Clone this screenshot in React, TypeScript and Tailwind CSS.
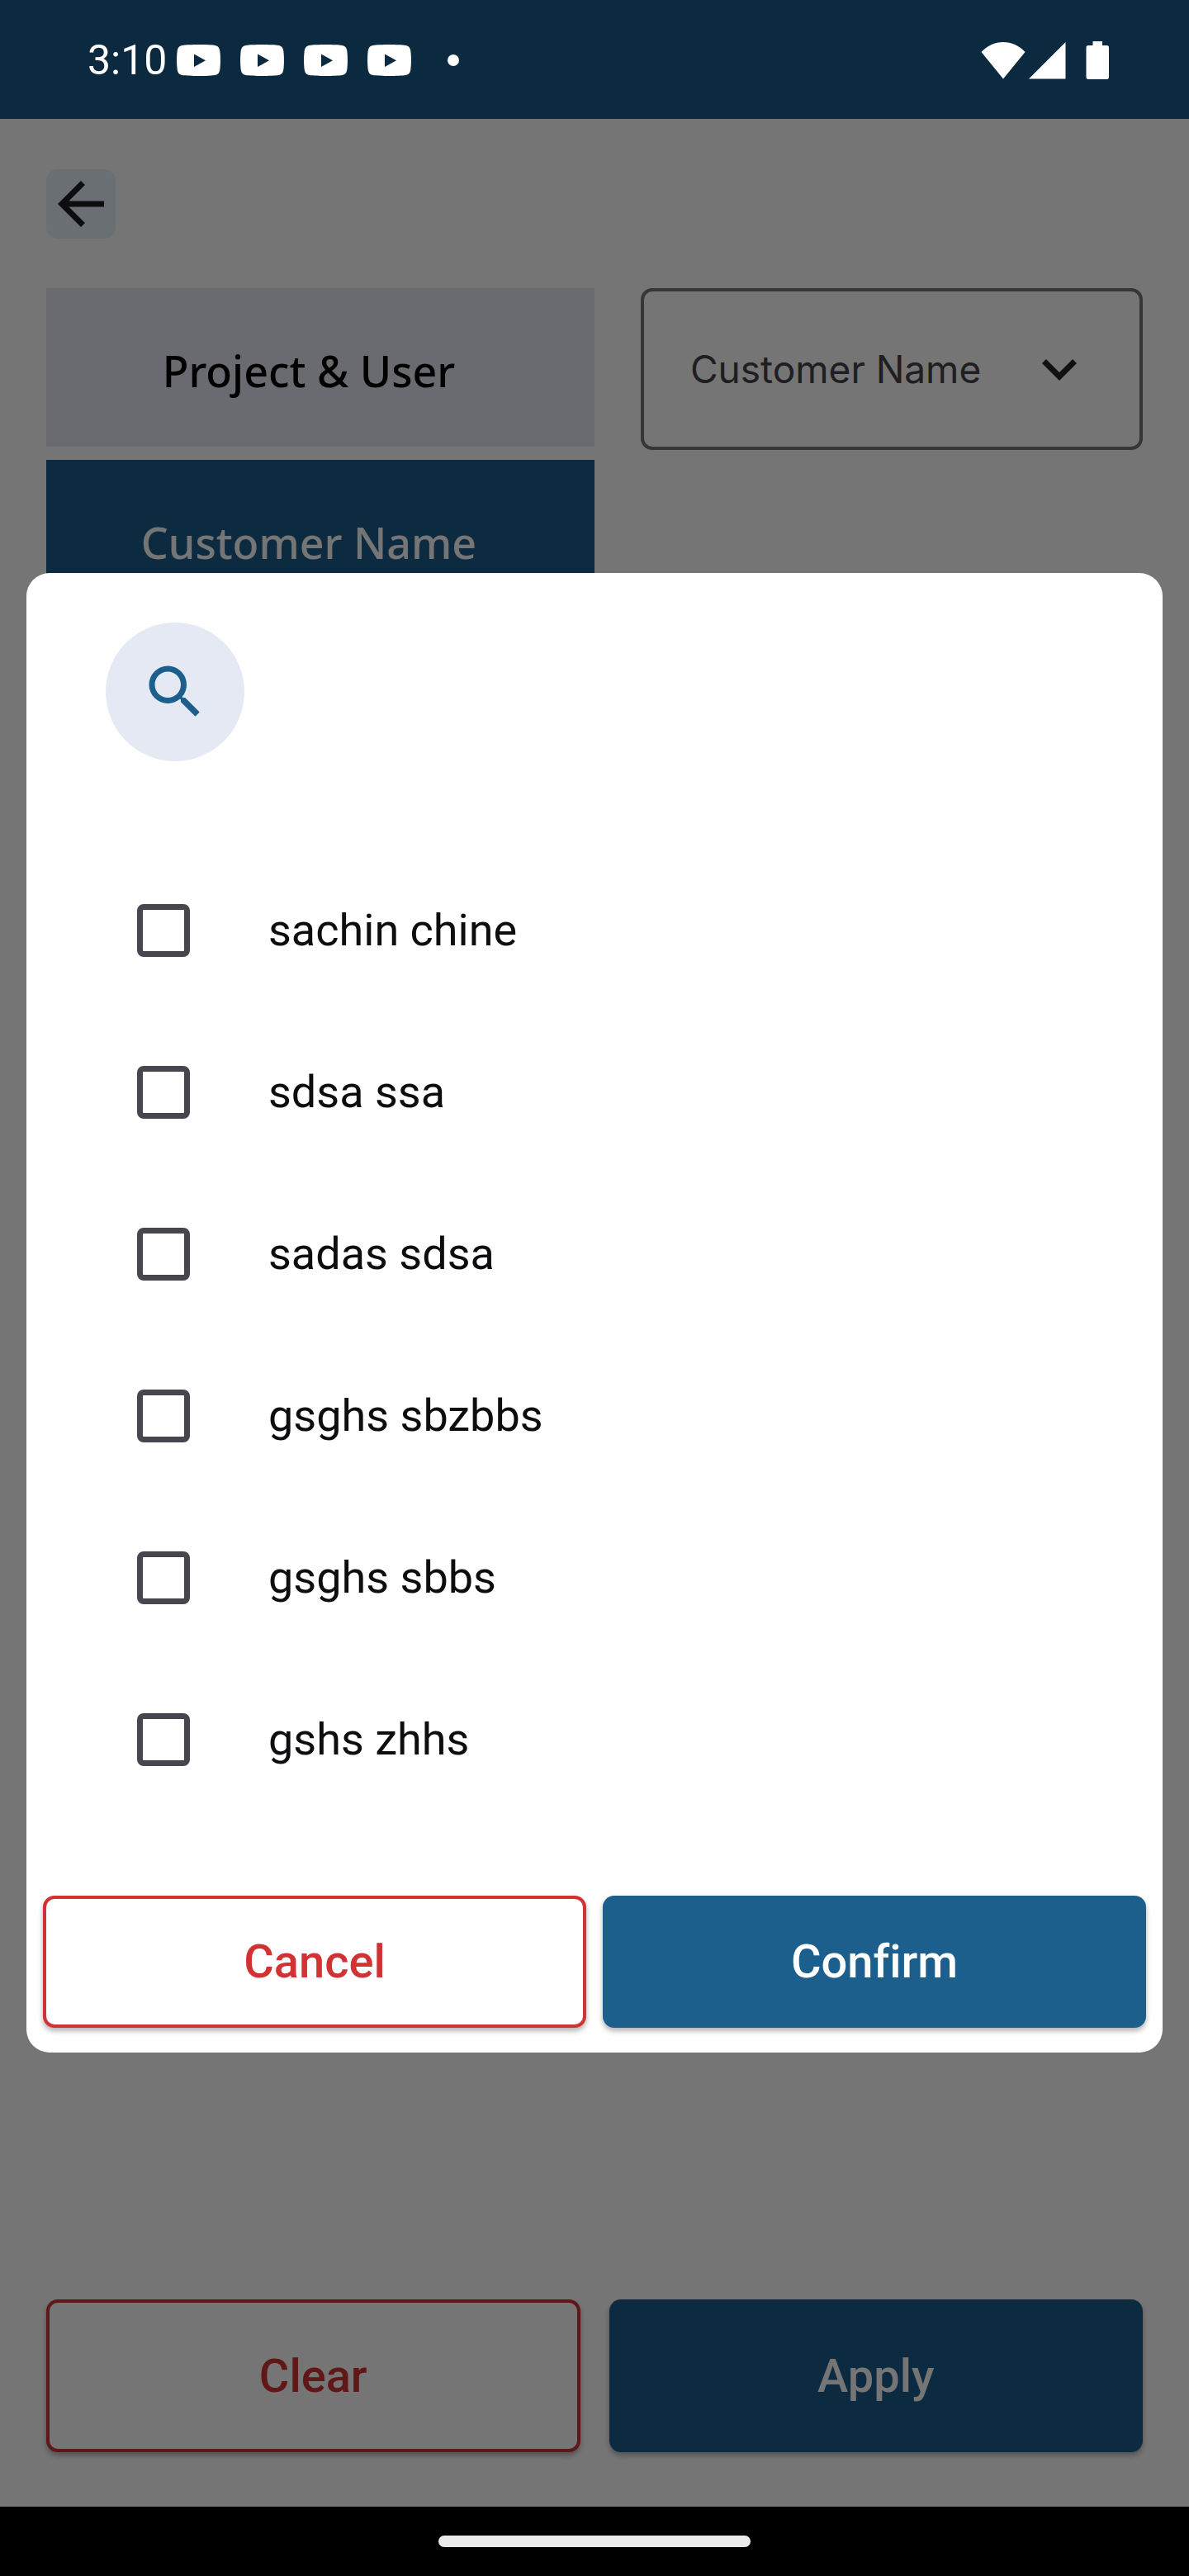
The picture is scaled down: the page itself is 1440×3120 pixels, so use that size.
import { useState } from "react";
import { MdArrowBack, MdKeyboardArrowDown, MdSearch } from "react-icons/md";

const customers = [
  "sachin chine",
  "sdsa ssa",
  "sadas sdsa",
  "gsghs sbzbbs",
  "gsghs sbbs",
  "gshs zhhs",
];

function VideoIcon() {
  return (
    <svg viewBox="0 0 53 38" className="h-[38px] w-[53px]" fill="#ffffff" aria-hidden="true">
      <path
        fillRule="evenodd"
        d="M26.500 0C34 0 42 .3 46.500 1C50 1.600 51.600 3.500 52.200 7C53.200 14 53.200 24 52.200 31C51.600 34.500 50 36.400 46.500 37C42 37.700 34 38 26.500 38S11 37.700 6.500 37C3 36.400 1.400 34.500.8 31C-.2 24-.2 14 .8 7C1.400 3.500 3 1.600 6.500 1C11 .3 19 0 26.500 0ZM21 11.500V27L35 19.200Z"
      />
    </svg>
  );
}

function StatusBar() {
  return (
    <header className="flex h-36 items-center justify-between bg-[#0c2a3f] pt-0.5 pr-[97px] pl-[106px] text-white">
      <div className="flex items-center">
        <span className="text-[50px] leading-[58px]">3:10</span>
        <div className="ml-3 flex items-center gap-6">
          <VideoIcon />
          <VideoIcon />
          <VideoIcon />
          <VideoIcon />
        </div>
        <span className="ml-11 size-3.5 rounded-full bg-white" />
      </div>
      <div className="flex items-center">
        <svg viewBox="0 0 54 46" className="h-[46px] w-[54px]" fill="currentColor" aria-hidden="true">
          <path d="M27 45.500L.5 13C8 5 17 1 27 1S46 5 53.500 13Z" />
        </svg>
        <svg viewBox="0 0 45 46" className="ml-1 h-[46px] w-[45px]" fill="currentColor" aria-hidden="true">
          <path d="M0 45.500L44.500 1V45.500Z" />
        </svg>
        <svg viewBox="0 0 28 46" className="ml-6 h-[46px] w-7" fill="currentColor" aria-hidden="true">
          <path d="M8.500 0H20V5H25.500Q28 5 28 7.500V43Q28 46 25.500 46H3Q.5 46 .5 43V7.500Q.5 5 3 5H8.500Z" />
        </svg>
      </div>
    </header>
  );
}

function FilterPage() {
  return (
    <div className="flex flex-1 flex-col justify-between px-14 pt-[61px] pb-[66px]">
      <div>
        <button
          type="button"
          aria-label="Back"
          className="flex size-[84px] items-center justify-center rounded-[14px] bg-[#e6f1fa] text-[#1d1b20]"
        >
          <MdArrowBack className="size-[84px]" />
        </button>
        <div className="mt-[60px] grid grid-cols-2">
          <div className="flex flex-col gap-4 font-['Noto_Sans',sans-serif] text-[52px] leading-[64px] font-medium">
            <button type="button" className="h-48 bg-[#e6e9f3] pt-2 pr-7 text-black">
              Project &amp; User
            </button>
            <button type="button" className="h-48 bg-[#1c5e8c] pt-2 pr-7 text-white">
              Customer Name
            </button>
          </div>
          <div className="relative ml-14 h-[196px]">
            <select
              aria-label="Customer Name"
              className="size-full appearance-none rounded-[14px] border-4 border-[#79747e] bg-transparent pl-14 font-['Inter',sans-serif] text-[46px] text-[#45424a]"
            >
              <option>Customer Name</option>
            </select>
            <MdKeyboardArrowDown className="pointer-events-none absolute inset-y-0 right-[59px] my-auto size-[84px] text-[#252525]" />
          </div>
        </div>
      </div>
      <div className="grid grid-cols-2 gap-[35px] text-[56px] leading-[66px] font-medium">
        <button
          type="button"
          className="h-[185px] rounded-[14px] border-4 border-[#d13234] bg-white text-[#d13234] shadow-[0_4px_6px_rgba(0,0,0,0.3)]"
        >
          Clear
        </button>
        <button
          type="button"
          className="h-[185px] rounded-[14px] bg-[#1c5e8c] text-white shadow-[0_4px_6px_rgba(0,0,0,0.3)]"
        >
          Apply
        </button>
      </div>
    </div>
  );
}

function CustomerDialog() {
  const [selected, setSelected] = useState<string[]>([]);
  const toggle = (name: string) =>
    setSelected((current) =>
      current.includes(name) ? current.filter((item) => item !== name) : [...current, name],
    );

  return (
    <div
      role="dialog"
      aria-modal="true"
      aria-label="Select customers"
      className="w-full rounded-[28px] bg-white px-5 pt-[60px] pb-[30px]"
    >
      <button
        type="button"
        aria-label="Search"
        className="ml-[76px] flex size-[168px] items-center justify-center rounded-full bg-[#e4e9f3] text-[#1c5e8c]"
      >
        <MdSearch className="size-[84px]" />
      </button>
      <ul className="mt-[107px] pl-[114px]">
        {customers.map((name) => (
          <li key={name}>
            <label className="flex h-[196px] items-center gap-[95px] text-[54px] leading-[64px] text-[#0d0d10]">
              <input
                type="checkbox"
                checked={selected.includes(name)}
                onChange={() => toggle(name)}
                className="size-16 appearance-none rounded-lg border-[7px] border-[#49454f] checked:bg-[#1c5e8c]"
              />
              {name}
            </label>
          </li>
        ))}
      </ul>
      <div className="mt-[91px] grid grid-cols-2 gap-5 text-[56px] leading-[66px] font-medium">
        <button
          type="button"
          className="h-40 rounded-[14px] border-4 border-[#d13234] bg-white text-[#d13234] shadow-[0_4px_6px_rgba(0,0,0,0.3)]"
        >
          Cancel
        </button>
        <button
          type="button"
          className="h-40 rounded-[14px] bg-[#1c5e8c] text-white shadow-[0_4px_6px_rgba(0,0,0,0.3)] [font-variant-ligatures:none]"
        >
          Confirm
        </button>
      </div>
    </div>
  );
}

export default function App() {
  return (
    <div className="flex min-h-screen flex-col bg-white font-['Roboto',sans-serif]">
      <StatusBar />
      <main className="relative flex flex-1 flex-col">
        <FilterPage />
        <div className="absolute inset-0 flex items-center bg-black/54 px-8">
          <CustomerDialog />
        </div>
      </main>
      <footer className="flex h-[84px] justify-center bg-black pt-[35px]">
        <span className="h-3.5 w-[378px] rounded-full bg-[#ebebeb]" />
      </footer>
    </div>
  );
}
